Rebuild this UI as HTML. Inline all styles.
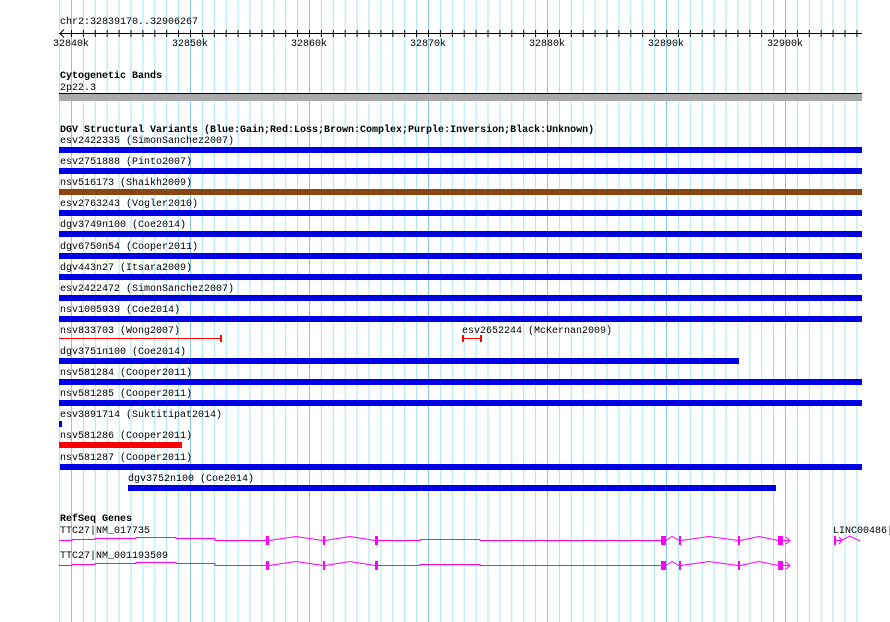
<!DOCTYPE html>
<html><head><meta charset="utf-8"><style>
html,body{margin:0;padding:0;background:#fff;}
svg{display:block;}
text{font-family:"Liberation Mono",monospace;font-size:10px;fill:#000;}
.b{font-weight:bold;}
</style></head><body>
<svg width="890" height="622" xmlns="http://www.w3.org/2000/svg">
<defs>
<pattern id="mi" x="71" y="0" width="11.9" height="622" patternUnits="userSpaceOnUse"><rect x="0" y="0" width="1" height="622" fill="#a8e6ee"/></pattern>
<pattern id="ma" x="71" y="0" width="119" height="622" patternUnits="userSpaceOnUse"><rect x="0" y="0" width="1" height="622" fill="#88c4ee"/></pattern>
<pattern id="tk" x="71" y="0" width="11.9" height="622" patternUnits="userSpaceOnUse"><rect x="0" y="0" width="1" height="622" fill="#000"/></pattern>
</defs>
<rect x="59" y="0" width="804" height="622" fill="url(#mi)"/>
<rect x="59" y="0" width="804" height="622" fill="url(#ma)"/>
<text x="60" y="24">chr2:32839170..32906267</text>
<rect x="59" y="30" width="804" height="7" fill="#fff"/>
<rect x="66" y="30" width="796" height="7" fill="url(#tk)"/>
<line x1="59" y1="33.5" x2="862" y2="33.5" stroke="#000"/>
<polyline points="64,29.5 60,33.5 64,37.5" fill="none" stroke="#000"/>
<g text-anchor="middle">
<text x="71" y="46">32840k</text><text x="190" y="46">32850k</text><text x="309" y="46">32860k</text><text x="428" y="46">32870k</text><text x="547" y="46">32880k</text><text x="666" y="46">32890k</text><text x="785" y="46">32900k</text>
</g>
<text class="b" x="60" y="78">Cytogenetic Bands</text>
<text x="60" y="90">2p22.3</text>
<rect x="59" y="93" width="803" height="8" fill="#aaa"/>
<line x1="59" y1="93.5" x2="862" y2="93.5" stroke="#000"/>
<text class="b" x="60" y="132">DGV Structural Variants (Blue:Gain;Red:Loss;Brown:Complex;Purple:Inversion;Black:Unknown)</text>

<text x="60" y="143">esv2422335 (SimonSanchez2007)</text><rect x="59" y="147" width="803" height="6" fill="#0000e6"/>
<text x="60" y="164">esv2751888 (Pinto2007)</text><rect x="59" y="168" width="803" height="6" fill="#0000e6"/>
<text x="60" y="185">nsv516173 (Shaikh2009)</text><rect x="59" y="189" width="803" height="6" fill="#8b4513"/>
<text x="60" y="206">esv2763243 (Vogler2010)</text><rect x="59" y="210" width="803" height="6" fill="#0000e6"/>
<text x="60" y="227">dgv3749n100 (Coe2014)</text><rect x="59" y="231" width="803" height="6" fill="#0000e6"/>
<text x="60" y="249">dgv6750n54 (Cooper2011)</text><rect x="59" y="253" width="803" height="6" fill="#0000e6"/>
<text x="60" y="270">dgv443n27 (Itsara2009)</text><rect x="59" y="274" width="803" height="6" fill="#0000e6"/>
<text x="60" y="291">esv2422472 (SimonSanchez2007)</text><rect x="59" y="295" width="803" height="6" fill="#0000e6"/>
<text x="60" y="312">nsv1005939 (Coe2014)</text><rect x="59" y="316" width="803" height="6" fill="#0000e6"/>
<text x="60" y="333">nsv833703 (Wong2007)</text>
<rect x="59" y="338" width="162" height="1" fill="#f00"/><rect x="220" y="335" width="2" height="7" fill="#f00"/>
<text x="462" y="333">esv2652244 (McKernan2009)</text>
<rect x="462" y="338" width="19" height="1" fill="#f00"/><rect x="462" y="335" width="2" height="7" fill="#f00"/><rect x="480" y="335" width="2" height="7" fill="#f00"/>
<text x="60" y="354">dgv3751n100 (Coe2014)</text><rect x="59" y="358" width="680" height="6" fill="#0000e6"/>
<text x="60" y="375">nsv581284 (Cooper2011)</text><rect x="59" y="379" width="803" height="6" fill="#0000e6"/>
<text x="60" y="396">nsv581285 (Cooper2011)</text><rect x="59" y="400" width="803" height="6" fill="#0000e6"/>
<text x="60" y="417">esv3891714 (Suktitipat2014)</text><rect x="59" y="421" width="3" height="6" fill="#0000e6"/>
<text x="60" y="438">nsv581286 (Cooper2011)</text><rect x="59" y="442" width="123" height="6" fill="#f00"/>
<text x="60" y="460">nsv581287 (Cooper2011)</text><rect x="60" y="464" width="802" height="6" fill="#0000e6"/>
<text x="128" y="481">dgv3752n100 (Coe2014)</text><rect x="128" y="485" width="648" height="6" fill="#0000e6"/>

<text class="b" x="60" y="521">RefSeq Genes</text>
<text x="60" y="533">TTC27|NM_017735</text>
<text x="60" y="558">TTC27|NM_001193509</text>
<text x="833" y="533">LINC00486|</text>

<g fill="none" stroke="#f0f" stroke-width="1">
<polyline points="59,540.5 72,540.5 72,539.5 95,539.5 95,538.5 136,538.5 136,537.5 176,537.5 176,538.5 215,538.5 215,540.5 266,540.5"/>
<polyline points="269,540.5 296,536.5 323,540.5"/>
<polyline points="325,540.5 350,536.5 375,540.5"/>
<polyline points="378,540.5 420,540.5 420,539.5 480,539.5 480,540.5 661,540.5"/>
<polyline points="666,540.5 672,536.5 679,540.5"/>
<polyline points="681,540.5 709,536.5 738,540.5"/>
<polyline points="740,540.5 759,536.5 778,540.5"/>
<line x1="783" y1="540.5" x2="790" y2="540.5"/><polyline points="786,537 790,540.5 786,544"/>
<polyline points="59,565.5 72,565.5 72,564.5 95,564.5 95,563.5 136,563.5 136,562.5 176,562.5 176,563.5 215,563.5 215,565.5 266,565.5"/>
<polyline points="269,565.5 296,561.5 323,565.5"/>
<polyline points="325,565.5 350,561.5 375,565.5"/>
<polyline points="378,565.5 420,565.5 420,564.5 480,564.5 480,565.5 661,565.5"/>
<polyline points="666,565.5 672,561.5 679,565.5"/>
<polyline points="681,565.5 709,561.5 738,565.5"/>
<polyline points="740,565.5 759,561.5 778,565.5"/>
<line x1="783" y1="565.5" x2="790" y2="565.5"/><polyline points="786,562 790,565.5 786,569"/>
<line x1="836" y1="540.5" x2="842" y2="540.5"/><polyline points="839,537 842,540.5 839,544"/><polyline points="842,540 850,536 860,541"/>
</g>
<g fill="#f0f">
<rect x="266" y="536" width="3" height="9"/><rect x="323" y="536" width="2" height="9"/><rect x="375" y="536" width="3" height="9"/><rect x="661" y="536" width="5" height="9"/><rect x="679" y="536" width="2" height="9"/><rect x="738" y="536" width="2" height="9"/><rect x="778" y="536" width="5" height="9"/>
<rect x="266" y="561" width="3" height="9"/><rect x="323" y="561" width="2" height="9"/><rect x="375" y="561" width="3" height="9"/><rect x="661" y="561" width="5" height="9"/><rect x="679" y="561" width="2" height="9"/><rect x="738" y="561" width="2" height="9"/><rect x="778" y="561" width="5" height="9"/>
<rect x="834" y="536" width="2" height="9"/>
</g>
</svg>
</body></html>
